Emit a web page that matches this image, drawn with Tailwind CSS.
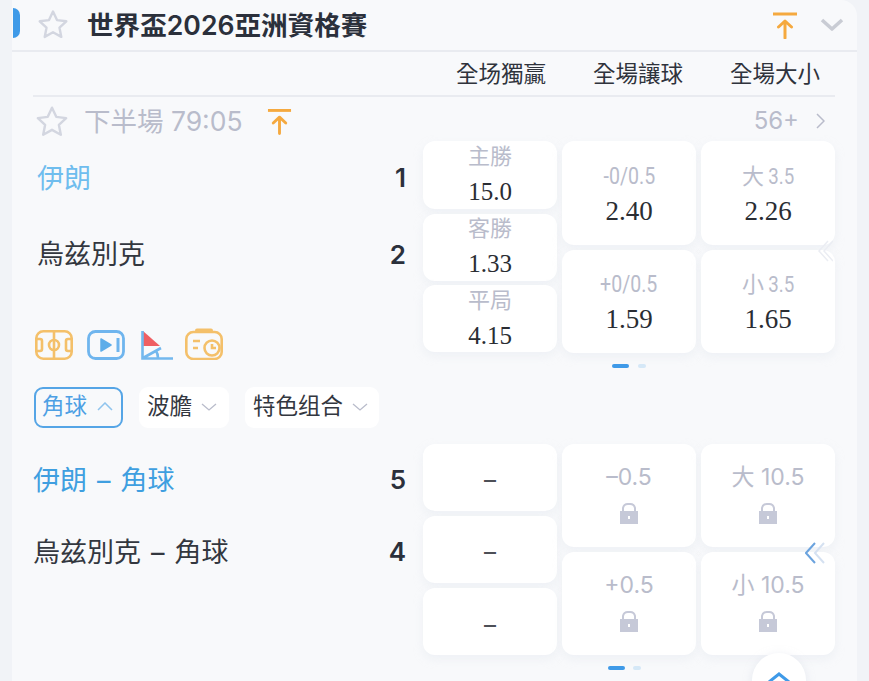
<!DOCTYPE html>
<html lang="zh-Hant">
<head>
    <meta charset="UTF-8">
    <title>世界盃2026亞洲資格賽</title>
    <script src="https://cdn.jsdelivr.net/npm/@tailwindcss/browser@4"></script>
</head>
<body class="bg-[#f1f3f7] font-['Inter','Noto_Sans_CJK_TC',sans-serif]">
<div class="relative h-[681px] w-[869px] overflow-hidden pl-[12px]">
    <div class="h-[681px] w-[845px] rounded-tr-2xl bg-[#f8f9fb]">
        <!-- League header -->
        <div class="flex h-[52px] items-center border-b-2 border-[#e9ebf0]">
            <div class="-mt-[5px] ml-px h-[30px] w-[7px] rounded-r-full bg-[#3f9ae8]"></div>
            <svg class="-mt-[3px] ml-[17px] h-[30px] w-[32px]" viewBox="0 0 32 30" fill="none" stroke="#d3d6e0" stroke-width="2.4" stroke-linejoin="round"><path d="M16 2.5l4 8.6 9.300 1.200-6.800 6.400 1.800 9.200-8.300-4.600-8.300 4.600 1.800-9.200-6.800-6.400 9.300-1.200z"/></svg>
            <h1 class="ml-[18px] text-[26.600px] leading-none font-semibold text-[#2b303b]">世界盃2026亞洲資格賽</h1>
            <svg class="ml-auto h-[27px] w-[26px]" viewBox="0 0 26 27" fill="none" stroke="#f5a93f" stroke-width="3"><path d="M1 2h24"/><path stroke-linecap="round" stroke-linejoin="round" d="M13 26V9M6.500 15L13 9l6.500 6"/></svg>
            <svg class="ml-[22px] mr-[13px] h-[14px] w-[24px]" viewBox="0 0 24 14" fill="none" stroke="#c9ccd4" stroke-width="3.600" stroke-linejoin="round"><path d="M2 2l10 9 10-9"/></svg>
        </div>

        <div class="pl-[21px] pr-[22px]">
            <!-- Market titles -->
            <div class="flex h-[45px] items-center justify-end border-b-2 border-[#e9ebf0] pt-[2px] text-[22.500px] leading-none text-[#2f333c]">
                <span class="mr-[47px]">全场獨贏</span>
                <span class="mr-[47px]">全場讓球</span>
                <span class="mr-[15px]">全場大小</span>
            </div>

            <!-- Match status -->
            <div class="flex h-[44px] items-center pt-[4px] text-[26.500px] leading-none text-[#b9bccb]">
                <svg class="ml-[2px] h-[32px] w-[34px]" viewBox="0 0 32 30" fill="none" stroke="#d3d6e0" stroke-width="2.300" stroke-linejoin="round"><path d="M16 2.500l4 8.600 9.300 1.200-6.800 6.400 1.800 9.200-8.300-4.600-8.300 4.600 1.800-9.200-6.800-6.400 9.300-1.200z"/></svg>
                <span class="ml-[15px]">下半場 79:05</span>
                <svg class="ml-[24px] h-[27px] w-[25px]" viewBox="0 0 26 27" fill="none" stroke="#f5a93f" stroke-width="3"><path d="M1 2h24"/><path stroke-linecap="round" stroke-linejoin="round" d="M13 26V9M6.500 15L13 9l6.500 6"/></svg>
                <span class="ml-auto text-[24px]">56+</span>
                <svg class="ml-[17px] mr-[10px] h-[16px] w-[9px]" viewBox="0 0 9 16" fill="none" stroke="#b9bccb" stroke-width="1.500"><path d="M1 1l7 7-7 7"/></svg>
            </div>

            <!-- Match odds -->
            <div class="flex">
                <div class="w-[390px]">
                    <div class="flex h-[76px] items-center justify-between pb-[2px] pl-[4px] pr-[17px]">
                        <span class="text-[27px] leading-none text-[#6fbdee]">伊朗</span>
                        <span class="text-[26px] leading-none font-semibold text-[#2b303b]">1</span>
                    </div>
                    <div class="flex h-[76px] items-center justify-between pb-px pl-[4px] pr-[17px]">
                        <span class="text-[27px] leading-none text-[#33373f]">烏兹別克</span>
                        <span class="text-[26px] leading-none font-semibold text-[#2b303b]">2</span>
                    </div>
                    <div class="mt-[37px] flex items-center gap-[14px] pl-[2px]">
                        <svg class="h-[30px] w-[38px]" viewBox="0 0 38 30" fill="none" stroke="#f4c06a" stroke-width="2.600"><rect x="1.300" y="1.300" width="35.400" height="27.400" rx="7"/><path d="M19 1v28"/><circle cx="19" cy="15" r="5"/><path d="M1 9h4a2 2 0 0 1 2 2v8a2 2 0 0 1-2 2H1M37 9h-4a2 2 0 0 0-2 2v8a2 2 0 0 0 2 2h4"/></svg>
                        <svg class="h-[30px] w-[38px]" viewBox="0 0 38 30" fill="none" stroke="#6fb5ee" stroke-width="2.800"><rect x="1.500" y="1.500" width="35" height="27" rx="7"/><path d="M31 8v14" stroke-width="3"/><path fill="#5dade9" stroke="#5dade9" stroke-width="1.500" stroke-linejoin="round" d="M14 9l10 6-10 6z"/></svg>
                        <svg class="ml-[2px] -mr-[2px] h-[30px] w-[32px]" viewBox="0 0 32 30" fill="none"><path fill="#ef5f63" d="M2 1l17 15H2z"/><path stroke="#73b8ee" stroke-width="2.600" d="M1.500 1v27.500H32M2 28l18-10M15 21c1.500 2 2 4 2 7"/></svg>
                        <svg class="-mt-[2px] h-[32px] w-[38px]" viewBox="0 0 38 32" fill="none" stroke="#f4c06a" stroke-width="2.600"><rect x="1.300" y="4" width="35.400" height="27" rx="7"/><path d="M12 2.500h14" stroke-width="4" stroke-linecap="round"/><path d="M8 13h7M8 20h5"/><circle cx="27" cy="20" r="7.500" fill="#f8f9fb"/><path d="M27 16v4h4"/></svg>
                    </div>
                </div>
                <div class="w-[412px]">
                    <div class="flex gap-[5px]">
                        <div class="flex w-[134px] flex-col gap-[4.500px]">
                            <div class="flex h-[68px] flex-col items-center justify-center rounded-xl bg-white shadow-[0_4px_10px_rgba(220,225,235,0.35)]">
                                <span class="text-[22px] leading-[30px] text-[#b9bccb]">主勝</span>
                                <span class="mt-[4px] font-['Liberation_Serif',serif] text-[25px] leading-[34px] text-[#2a2d33]">15.0</span>
                            </div>
                            <div class="flex h-[67px] flex-col items-center justify-center rounded-xl bg-white shadow-[0_4px_10px_rgba(220,225,235,0.35)]">
                                <span class="text-[22px] leading-[30px] text-[#b9bccb]">客勝</span>
                                <span class="mt-[4px] font-['Liberation_Serif',serif] text-[25px] leading-[34px] text-[#2a2d33]">1.33</span>
                            </div>
                            <div class="flex h-[67px] flex-col items-center justify-center rounded-xl bg-white shadow-[0_4px_10px_rgba(220,225,235,0.35)]">
                                <span class="text-[22px] leading-[30px] text-[#b9bccb]">平局</span>
                                <span class="mt-[4px] font-['Liberation_Serif',serif] text-[25px] leading-[34px] text-[#2a2d33]">4.15</span>
                            </div>
                        </div>
                        <div class="flex w-[134px] flex-col gap-[5px]">
                            <div class="flex h-[104px] flex-col items-center justify-center rounded-xl bg-white pt-[3px] shadow-[0_4px_10px_rgba(220,225,235,0.35)]">
                                <span class="inline-block scale-x-[0.85] font-['Roboto',sans-serif] text-[23px] leading-[30px] text-[#b9bccb]">-0/0.5</span>
                                <span class="mt-[2px] font-['Liberation_Serif',serif] text-[27px] leading-[34px] text-[#2a2d33]">2.40</span>
                            </div>
                            <div class="flex h-[103px] flex-col items-center justify-center rounded-xl bg-white pt-[2px] shadow-[0_4px_10px_rgba(220,225,235,0.35)]">
                                <span class="inline-block scale-x-[0.85] font-['Roboto',sans-serif] text-[23px] leading-[30px] text-[#b9bccb]">+0/0.5</span>
                                <span class="mt-[2px] font-['Liberation_Serif',serif] text-[27px] leading-[34px] text-[#2a2d33]">1.59</span>
                            </div>
                        </div>
                        <div class="flex w-[134px] flex-col gap-[5px]">
                            <div class="flex h-[104px] flex-col items-center justify-center rounded-xl bg-white pt-[3px] shadow-[0_4px_10px_rgba(220,225,235,0.35)]">
                                <span class="pl-[3px] font-['Roboto','Noto_Sans_CJK_TC',sans-serif] text-[22px] leading-[30px] text-[#b9bccb]">大 <span class="-ml-[3px] inline-block scale-x-[0.85]">3.5</span></span>
                                <span class="mt-[2px] font-['Liberation_Serif',serif] text-[27px] leading-[34px] text-[#2a2d33]">2.26</span>
                            </div>
                            <div class="flex h-[103px] flex-col items-center justify-center rounded-xl bg-white pt-[2px] shadow-[0_4px_10px_rgba(220,225,235,0.35)]">
                                <span class="pl-[3px] font-['Roboto','Noto_Sans_CJK_TC',sans-serif] text-[22px] leading-[30px] text-[#b9bccb]">小 <span class="-ml-[3px] inline-block scale-x-[0.85]">3.5</span></span>
                                <span class="mt-[2px] font-['Liberation_Serif',serif] text-[27px] leading-[34px] text-[#2a2d33]">1.65</span>
                            </div>
                        </div>
                    </div>
                    <div class="mt-[11px] flex justify-center gap-[9px]">
                        <div class="h-[4px] w-[17px] rounded-full bg-[#3f9ae8]"></div>
                        <div class="h-[4px] w-[8px] rounded-full bg-[#d5e8f7]"></div>
                    </div>
                </div>
            </div>

            <!-- Extra market tabs -->
            <div class="mt-[19px] flex h-[41px] gap-[16px] pl-px text-[22.500px] leading-none">
                <div class="flex w-[89px] items-center gap-[10px] rounded-[9px] border-2 border-[#55a5e6] pb-[2px] pl-[6px] text-[#4da0e4]">
                    <span>角球</span>
                    <svg class="h-[9px] w-[16px]" viewBox="0 0 16 9" fill="none" stroke="#8fc4ee" stroke-width="1.500"><path d="M1 8l7-7 7 7"/></svg>
                </div>
                <div class="flex w-[90px] items-center gap-[9px] rounded-[9px] bg-white pb-[2px] pl-[8px] text-[#33373f]">
                    <span>波膽</span>
                    <svg class="h-[8px] w-[16px]" viewBox="0 0 16 8" fill="none" stroke="#b9bccb" stroke-width="1.300"><path d="M1 1l7 6 7-6"/></svg>
                </div>
                <div class="flex w-[134px] items-center gap-[9px] rounded-[9px] bg-white pb-[2px] pl-[8px] text-[#33373f]">
                    <span>特色组合</span>
                    <svg class="h-[8px] w-[16px]" viewBox="0 0 16 8" fill="none" stroke="#b9bccb" stroke-width="1.300"><path d="M1 1l7 6 7-6"/></svg>
                </div>
            </div>

            <!-- Corner odds -->
            <div class="mt-[16px] flex">
                <div class="w-[390px]">
                    <div class="flex h-[72px] items-center justify-between pr-[17px]">
                        <span class="text-[27px] leading-none text-[#3f9fe0]">伊朗<span class="mx-[10px]">–</span>角球</span>
                        <span class="text-[26px] leading-none font-semibold text-[#2b303b]">5</span>
                    </div>
                    <div class="flex h-[72px] items-center justify-between pr-[17px]">
                        <span class="text-[27px] leading-none text-[#33373f]">烏兹別克<span class="mx-[10px]">–</span>角球</span>
                        <span class="text-[26px] leading-none font-semibold text-[#2b303b]">4</span>
                    </div>
                </div>
                <div class="w-[412px]">
                    <div class="flex gap-[5px]">
                        <div class="flex w-[134px] flex-col gap-[5px]">
                            <div class="flex h-[67px] items-center justify-center rounded-xl bg-white pt-[4px] text-[24px] text-[#4d5057] shadow-[0_4px_10px_rgba(220,225,235,0.35)]">–</div>
                            <div class="flex h-[67px] items-center justify-center rounded-xl bg-white pt-[4px] text-[24px] text-[#4d5057] shadow-[0_4px_10px_rgba(220,225,235,0.35)]">–</div>
                            <div class="flex h-[67px] items-center justify-center rounded-xl bg-white pt-[6px] text-[24px] text-[#4d5057] shadow-[0_4px_10px_rgba(220,225,235,0.35)]">–</div>
                        </div>
                        <div class="flex w-[134px] flex-col gap-[5px]">
                            <div class="flex h-[103px] flex-col items-center justify-center gap-[10px] rounded-xl bg-white pb-[6px] shadow-[0_4px_10px_rgba(220,225,235,0.35)]">
                                <span class="text-[23px] leading-[30px] text-[#b9bccb]">–0.5</span>
                                <svg class="h-[22px] w-[20px]" viewBox="0 0 20 22"><path fill="none" stroke="#c6c9d8" stroke-width="2" d="M4 10V6a5 5 0 0 1 5-4h2a5 5 0 0 1 5 4v4"/><path fill="#c6c9d8" fill-rule="evenodd" d="M1 9h18v13H1zM9 14v3h2v-3z"/></svg>
                            </div>
                            <div class="flex h-[103px] flex-col items-center justify-center gap-[10px] rounded-xl bg-white pb-[6px] shadow-[0_4px_10px_rgba(220,225,235,0.35)]">
                                <span class="text-[23px] leading-[30px] text-[#b9bccb]">+0.5</span>
                                <svg class="h-[22px] w-[20px]" viewBox="0 0 20 22"><path fill="none" stroke="#c6c9d8" stroke-width="2" d="M4 10V6a5 5 0 0 1 5-4h2a5 5 0 0 1 5 4v4"/><path fill="#c6c9d8" fill-rule="evenodd" d="M1 9h18v13H1zM9 14v3h2v-3z"/></svg>
                            </div>
                        </div>
                        <div class="flex w-[134px] flex-col gap-[5px]">
                            <div class="flex h-[103px] flex-col items-center justify-center gap-[10px] rounded-xl bg-white pb-[6px] shadow-[0_4px_10px_rgba(220,225,235,0.35)]">
                                <span class="text-[23px] leading-[30px] text-[#b9bccb]">大 10.5</span>
                                <svg class="h-[22px] w-[20px]" viewBox="0 0 20 22"><path fill="none" stroke="#c6c9d8" stroke-width="2" d="M4 10V6a5 5 0 0 1 5-4h2a5 5 0 0 1 5 4v4"/><path fill="#c6c9d8" fill-rule="evenodd" d="M1 9h18v13H1zM9 14v3h2v-3z"/></svg>
                            </div>
                            <div class="flex h-[103px] flex-col items-center justify-center gap-[10px] rounded-xl bg-white pb-[6px] shadow-[0_4px_10px_rgba(220,225,235,0.35)]">
                                <span class="text-[23px] leading-[30px] text-[#b9bccb]">小 10.5</span>
                                <svg class="h-[22px] w-[20px]" viewBox="0 0 20 22"><path fill="none" stroke="#c6c9d8" stroke-width="2" d="M4 10V6a5 5 0 0 1 5-4h2a5 5 0 0 1 5 4v4"/><path fill="#c6c9d8" fill-rule="evenodd" d="M1 9h18v13H1zM9 14v3h2v-3z"/></svg>
                            </div>
                        </div>
                    </div>
                    <div class="mt-[11px] flex justify-center gap-[8px] pr-[10px]">
                        <div class="h-[4px] w-[17px] rounded-full bg-[#3f9ae8]"></div>
                        <div class="h-[4px] w-[8px] rounded-full bg-[#d5e8f7]"></div>
                    </div>
                </div>
            </div>
        </div>
    </div>

    <!-- Swipe hints -->
    <svg class="absolute left-[817px] top-[240px] h-[22px] w-[16px]" viewBox="0 0 16 22" fill="none" stroke="#ebedf3" stroke-width="1.500"><path d="M11 1L2 11l9 10M16 1L7 11l9 10"/></svg>
    <svg class="absolute left-[805px] top-[542px] h-[22px] w-[22px]" viewBox="0 0 22 22" fill="none" stroke-width="2"><path stroke="#6ba3de" d="M10 1L1 11l9 10"/><path stroke="#d5e1f1" d="M19 1l-9 10 9 10"/></svg>

    <!-- Scroll to top -->
    <div class="absolute left-[752px] top-[653px] flex h-[54px] w-[54px] justify-center rounded-full bg-white pt-[19px] shadow-[0_2px_8px_rgba(210,215,230,0.5)]">
        <svg class="h-[10px] w-[22px]" viewBox="0 0 22 10" fill="none" stroke="#3f9ae8" stroke-width="3"><path d="M1 10l10-8 10 8"/></svg>
    </div>
</div>
</body>
</html>
